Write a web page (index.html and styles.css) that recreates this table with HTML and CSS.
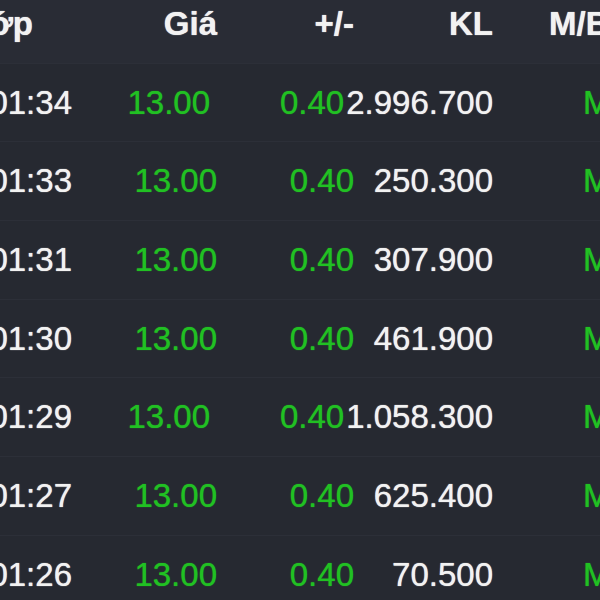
FILE: index.html
```html
<!DOCTYPE html>
<html lang="vi">
<head>
  <meta charset="UTF-8" />
  <meta name="viewport" content="width=device-width, initial-scale=1" />
  <title>Khớp lệnh</title>
  <link rel="stylesheet" href="styles.css">
</head>
<body>

  <!-- bảng khớp lệnh -->
  <div class="trades">
    <div class="row head">
      <div class="cell time">Khớp</div>
      <div class="cell price">Giá</div>
      <div class="cell change">+/-</div>
      <div class="cell vol">KL</div>
      <div class="cell side">M/B</div>
    </div>
    <div class="row">
      <div class="cell time">10:01:34</div>
      <div class="cell price up">13.00</div>
      <div class="cell change up">0.40</div>
      <div class="cell vol">2.996.700</div>
      <div class="cell side up">M</div>
    </div>
    <div class="row">
      <div class="cell time">10:01:33</div>
      <div class="cell price up">13.00</div>
      <div class="cell change up">0.40</div>
      <div class="cell vol">250.300</div>
      <div class="cell side up">M</div>
    </div>
    <div class="row">
      <div class="cell time">10:01:31</div>
      <div class="cell price up">13.00</div>
      <div class="cell change up">0.40</div>
      <div class="cell vol">307.900</div>
      <div class="cell side up">M</div>
    </div>
    <div class="row">
      <div class="cell time">10:01:30</div>
      <div class="cell price up">13.00</div>
      <div class="cell change up">0.40</div>
      <div class="cell vol">461.900</div>
      <div class="cell side up">M</div>
    </div>
    <div class="row">
      <div class="cell time">10:01:29</div>
      <div class="cell price up">13.00</div>
      <div class="cell change up">0.40</div>
      <div class="cell vol">1.058.300</div>
      <div class="cell side up">M</div>
    </div>
    <div class="row">
      <div class="cell time">10:01:27</div>
      <div class="cell price up">13.00</div>
      <div class="cell change up">0.40</div>
      <div class="cell vol">625.400</div>
      <div class="cell side up">M</div>
    </div>
    <div class="row">
      <div class="cell time">10:01:26</div>
      <div class="cell price up">13.00</div>
      <div class="cell change up">0.40</div>
      <div class="cell vol">70.500</div>
      <div class="cell side up">M</div>
    </div>
  </div>

</body>
</html>
```

FILE: styles.css
```css
body {
  margin: 0;
  background: #262931;
  color: #f2f2f2;
  font-family: 'Liberation Sans', Arial, sans-serif;
  font-size: 33px;
  overflow: hidden;
}

.trades {
  margin-top: -15px;
  margin-left: -140px;
  width: 753px;
}

.row {
  display: flex;
  height: 78.7px;
  line-height: 78.7px;
  box-shadow: inset 0 -1px 0 #2c2f38;
  white-space: nowrap;
}

.row.head {
  background: #292c35;
  font-weight: bold;
}

.cell {
  box-sizing: border-box;
  text-align: right;
  text-shadow: 0 0 1px currentColor;
}

.time {
  flex: 0 0 212px;
}

.price {
  flex: 0 2.3 145px;
}

.change {
  flex: 0 1 137px;
}

.vol {
  flex: none;
  min-width: 139px;
  padding-left: 2px;
}

.side {
  flex: none;
  width: 120px;
  text-align: left;
  padding-left: 90px;
}

.head .time { padding-right: 39px; }
.head .side { padding-left: 56px; }

.up { color: #21c023; }
```
